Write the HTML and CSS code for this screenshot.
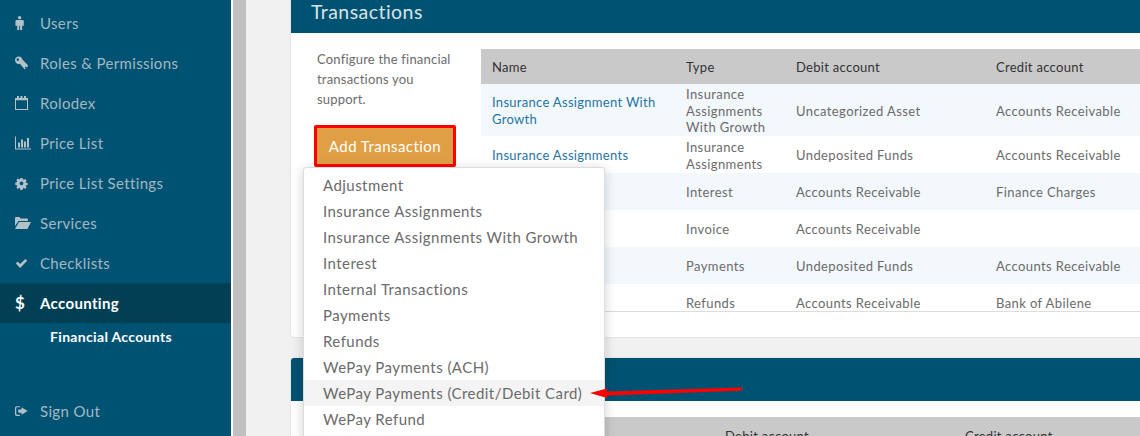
FILE: index.html
```html
<!DOCTYPE html>
<html lang="en">

<head>
    <meta charset="utf-8">
    <link rel="stylesheet" href="styles.css">
    <title>Accounting</title>
</head>

<body>
    <nav class="sidebar">
        <a class="nav-item"><svg class="nav-icon" viewBox="0 0 13 15"><circle cx="4.500" cy="1.800" r="1.800"/><path d="M1.500 4.300h6q1.400 0 1.400 1.400v4.800H7.200V15H5v-4.500h-.9V15H1.900v-4.500H0V5.700q0-1.400 1.500-1.400z"/></svg>Users</a>
        <a class="nav-item"><svg class="nav-icon" viewBox="0 0 14 14"><path fill-rule="evenodd" d="M4 0a4 4 0 0 1 3.900 3.200L13.500 9 14 10.500 12.700 11.800 11.700 10.800 10.600 11.900 11.500 13 10.500 14 5.300 7.800A4 4 0 1 1 4 0zM3 2a1.300 1.300 0 1 0 .01 0z"/></svg>Roles &amp; Permissions</a>
        <a class="nav-item"><svg class="nav-icon" viewBox="0 0 13 14"><path fill-rule="evenodd" d="M0 2h2V0h2v2h1.500V0h2v2H9V0h2v2h2v12H0zM1 4.300V13h11V4.300z"/></svg>Rolodex</a>
        <a class="nav-item"><svg class="nav-icon nav-icon-wide" viewBox="0 0 16 13"><path d="M0 0h1v12h15v1H0zM3 6h2v5H3zM6 3h2v8H6zM9 5h2v6H9zM12 1.500h2V11h-2z"/></svg>Price List</a>
        <a class="nav-item"><svg class="nav-icon" viewBox="0 0 16 16"><path fill-rule="evenodd" d="M6.500 1h3l.4 2 1.300.6 1.800-1.100 2 2-1.100 1.800.6 1.300 2 .4v2.600l-2 .4-.6 1.300 1.100 1.800-2 2-1.800-1.100-1.300.6-.4 2h-3l-.4-2-1.300-.6-1.800 1.100-2-2 1.100-1.800-.6-1.300-2-.4V7.400l2-.4.6-1.300-1.100-1.800 2-2 1.800 1.100 1.300-.6zM8 6a2.500 2.500 0 1 0 .01 0z" transform="translate(.8 .8) scale(.9)"/></svg>Price List Settings</a>
        <a class="nav-item"><svg class="nav-icon nav-icon-wide" viewBox="0 0 16 12"><path d="M0 1q0-1 1-1h3.500l1 1.500H12q1 0 1 1V4H3.500L0 9zM4 5h12l-3.500 7H0z"/></svg>Services</a>
        <a class="nav-item"><svg class="nav-icon" viewBox="0 0 16 16"><path d="M1 8.500l2.300-2.300 3 3L12.800 3 15 5.300 6.300 14z"/></svg>Checklists</a>
        <a class="nav-item nav-item-active"><span class="nav-icon nav-dollar">$</span>Accounting</a>
        <a class="nav-sub">Financial Accounts</a>
        <a class="nav-item nav-signout"><svg class="nav-icon" viewBox="0 0 16 16"><path fill-rule="evenodd" d="M2 2h4v1.500H2.500q-1 0-1 1v7q0 1 1 1H6V14H2q-2 0-2-2V4q0-2 2-2zM8 3.500l7.500 4.500L8 12.500V10H4V6h4z"/></svg>Sign Out</a>
    </nav>

    <div class="gutter"></div>

    <main class="content">
        <section class="panel">
            <h2 class="panel-head panel-head-first">Transactions</h2>
            <div class="panel-body">
                <div class="panel-side">
                    <p class="side-text">Configure the financial transactions you support.</p>
                    <button class="add-btn">Add Transaction</button>
                </div>
                <table class="grid">
                    <thead>
                        <tr>
                            <th class="col-name">Name</th>
                            <th class="col-type">Type</th>
                            <th class="col-debit">Debit account</th>
                            <th>Credit account</th>
                        </tr>
                    </thead>
                    <tbody>
                        <tr>
                            <td><a>Insurance Assignment With Growth</a></td>
                            <td>Insurance Assignments With Growth</td>
                            <td>Uncategorized Asset</td>
                            <td>Accounts Receivable</td>
                        </tr>
                        <tr>
                            <td><a>Insurance Assignments</a></td>
                            <td>Insurance Assignments</td>
                            <td>Undeposited Funds</td>
                            <td>Accounts Receivable</td>
                        </tr>
                        <tr>
                            <td><a>Interest</a></td>
                            <td>Interest</td>
                            <td>Accounts Receivable</td>
                            <td>Finance Charges</td>
                        </tr>
                        <tr>
                            <td><a>Invoice</a></td>
                            <td>Invoice</td>
                            <td>Accounts Receivable</td>
                            <td></td>
                        </tr>
                        <tr>
                            <td><a>Payments</a></td>
                            <td>Payments</td>
                            <td>Undeposited Funds</td>
                            <td>Accounts Receivable</td>
                        </tr>
                        <tr class="row-short">
                            <td><a>Refunds</a></td>
                            <td>Refunds</td>
                            <td>Accounts Receivable</td>
                            <td>Bank of Abilene</td>
                        </tr>
                    </tbody>
                </table>
            </div>
        </section>

        <section class="panel panel-second">
            <h2 class="panel-head"></h2>
            <div class="second-body">
                <div class="second-head">
                    <span class="second-debit">Debit account</span>
                    <span>Credit account</span>
                </div>
            </div>
        </section>
    </main>

    <ul class="dropdown">
        <li>Adjustment</li>
        <li>Insurance Assignments</li>
        <li>Insurance Assignments With Growth</li>
        <li>Interest</li>
        <li>Internal Transactions</li>
        <li>Payments</li>
        <li>Refunds</li>
        <li>WePay Payments (ACH)</li>
        <li class="dropdown-hover">WePay Payments (Credit/Debit Card)</li>
        <li>WePay Refund</li>
    </ul>

    <svg class="arrow" viewBox="0 0 160 20"><path d="M1 12L18 7.500 18 10.500 152 6.500Q154 7.800 152 9.700L18 14.500 18 17z"/></svg>
</body>

</html>
```

FILE: styles.css
```css
*,
*:before,
*:after {
    box-sizing: border-box;
}

html,
body {
    margin: 0;
    height: 100%;
    overflow: hidden;
}

body {
    display: flex;
    position: relative;
    background: #f1f1f1;
    font-family: "Lato", "Liberation Sans", sans-serif;
    font-size: 15px;
    letter-spacing: 0.45px;
    color: #6b6b6b;
}

.sidebar {
    flex: none;
    width: 231px;
    height: 436px;
    padding-top: 3px;
    display: flex;
    flex-direction: column;
    background: #005272;
}

.nav-item {
    display: flex;
    align-items: center;
    height: 40px;
    padding: 0 0 1px 15px;
    font-size: 15px;
    letter-spacing: 0.35px;
    color: #a3b8c2;
}

.nav-icon {
    flex: none;
    width: 13px;
    height: 14px;
    margin-right: 12px;
    fill: #b3c2c9;
}

.nav-icon-wide {
    width: 16px;
    margin-right: 9px;
}

.nav-item-active {
    background: #003f54;
    color: #fff;
    font-weight: 700;
}

.nav-dollar {
    font-size: 17px;
    font-weight: 700;
    line-height: 13px;
    color: #fff;
}

.nav-sub {
    padding: 5px 0 0 50px;
    font-size: 14px;
    font-weight: 700;
    line-height: 17px;
    letter-spacing: 0.33px;
    color: #fff;
}

.nav-signout {
    margin-top: auto;
    margin-bottom: 5px;
}

.gutter {
    flex: none;
    width: 15px;
    height: 436px;
    border-left: 2px solid #fff;
    background: #c0c0c0;
}

.content {
    flex: 1;
    min-width: 0;
    padding-left: 45px;
    overflow: hidden;
}

.panel {
    width: 900px;
    background: #fff;
    border-radius: 0 0 3px 3px;
    box-shadow: 0 0 2px #ccc;
}

.panel-head {
    height: 33px;
    margin: 0;
    padding-left: 20px;
    background: #005272;
    color: #d8e3e8;
    font-size: 19.500px;
    font-weight: 400;
    line-height: 23px;
}

.panel-second {
    margin-top: 21px;
    border-radius: 3px 3px 0 0;
}

.panel-second .panel-head {
    height: 43px;
    border-radius: 3px 3px 0 0;
}

.panel-body {
    display: flex;
    align-items: flex-start;
    height: 304px;
    padding-top: 16px;
}

.panel-side {
    flex: none;
    width: 190px;
    padding-left: 26px;
}

.side-text {
    margin: 0 0 16px;
    width: 140px;
    font-size: 13px;
    letter-spacing: 0.2px;
    line-height: 20px;
}

.add-btn {
    display: block;
    width: 142px;
    height: 42px;
    margin-left: -3px;
    padding: 0;
    border: 3px solid #f00;
    border-radius: 2px;
    background: #e09f45;
    color: #fff;
    font-family: inherit;
    font-size: 15px;
    letter-spacing: 0.45px;
}

.grid {
    flex: none;
    width: 659px;
    table-layout: fixed;
    border-collapse: collapse;
    border-bottom: 1px solid #ddd;
    font-size: 13px;
    letter-spacing: 0.4px;
    line-height: 17px;
}

.col-name {
    width: 194px;
}

.col-type {
    width: 110px;
}

.col-debit {
    width: 200px;
}

.grid th {
    height: 35px;
    padding: 2px 11px 0;
    background: #c9c9c9;
    color: #333;
    font-weight: 400;
    letter-spacing: 0.3px;
    text-align: left;
}

.grid td {
    height: 37px;
    padding: 2px 11px 0;
}

.grid tbody tr:first-child td {
    height: 52px;
    line-height: 16.670px;
}

.grid tbody tr:nth-child(odd) {
    background: #f3f8fc;
}

.grid .row-short td {
    height: 27px;
    padding-top: 12px;
    padding-bottom: 0;
    line-height: 15px;
}

.grid tbody .row-short {
    background: #fff;
}

.grid a {
    color: #1f75a3;
    letter-spacing: 0.3px;
}

.second-body {
    height: 40px;
    padding: 16px 0 0 190px;
}

.second-head {
    display: flex;
    height: 30px;
    padding-top: 11px;
    background: #c9c9c9;
    color: #333;
    font-size: 13px;
    letter-spacing: 0.3px;
}

.second-debit {
    width: 240px;
    margin-left: 244px;
}

/* menu opened over the panels */
.dropdown {
    position: absolute;
    left: 303px;
    top: 167px;
    width: 302px;
    height: 290px;
    margin: 0;
    padding: 4px 0 5px;
    list-style: none;
    background: #fff;
    border: 1px solid #ddd;
    border-radius: 3px;
    box-shadow: 0 2px 12px rgba(0, 0, 0, 0.18);
}

.dropdown li {
    height: 26px;
    padding-left: 19px;
    line-height: 26px;
}

.dropdown-hover {
    background: #f4f4f4;
}

.arrow {
    position: absolute;
    left: 589px;
    top: 381px;
    width: 160px;
    height: 20px;
    fill: #f00;
}
```
